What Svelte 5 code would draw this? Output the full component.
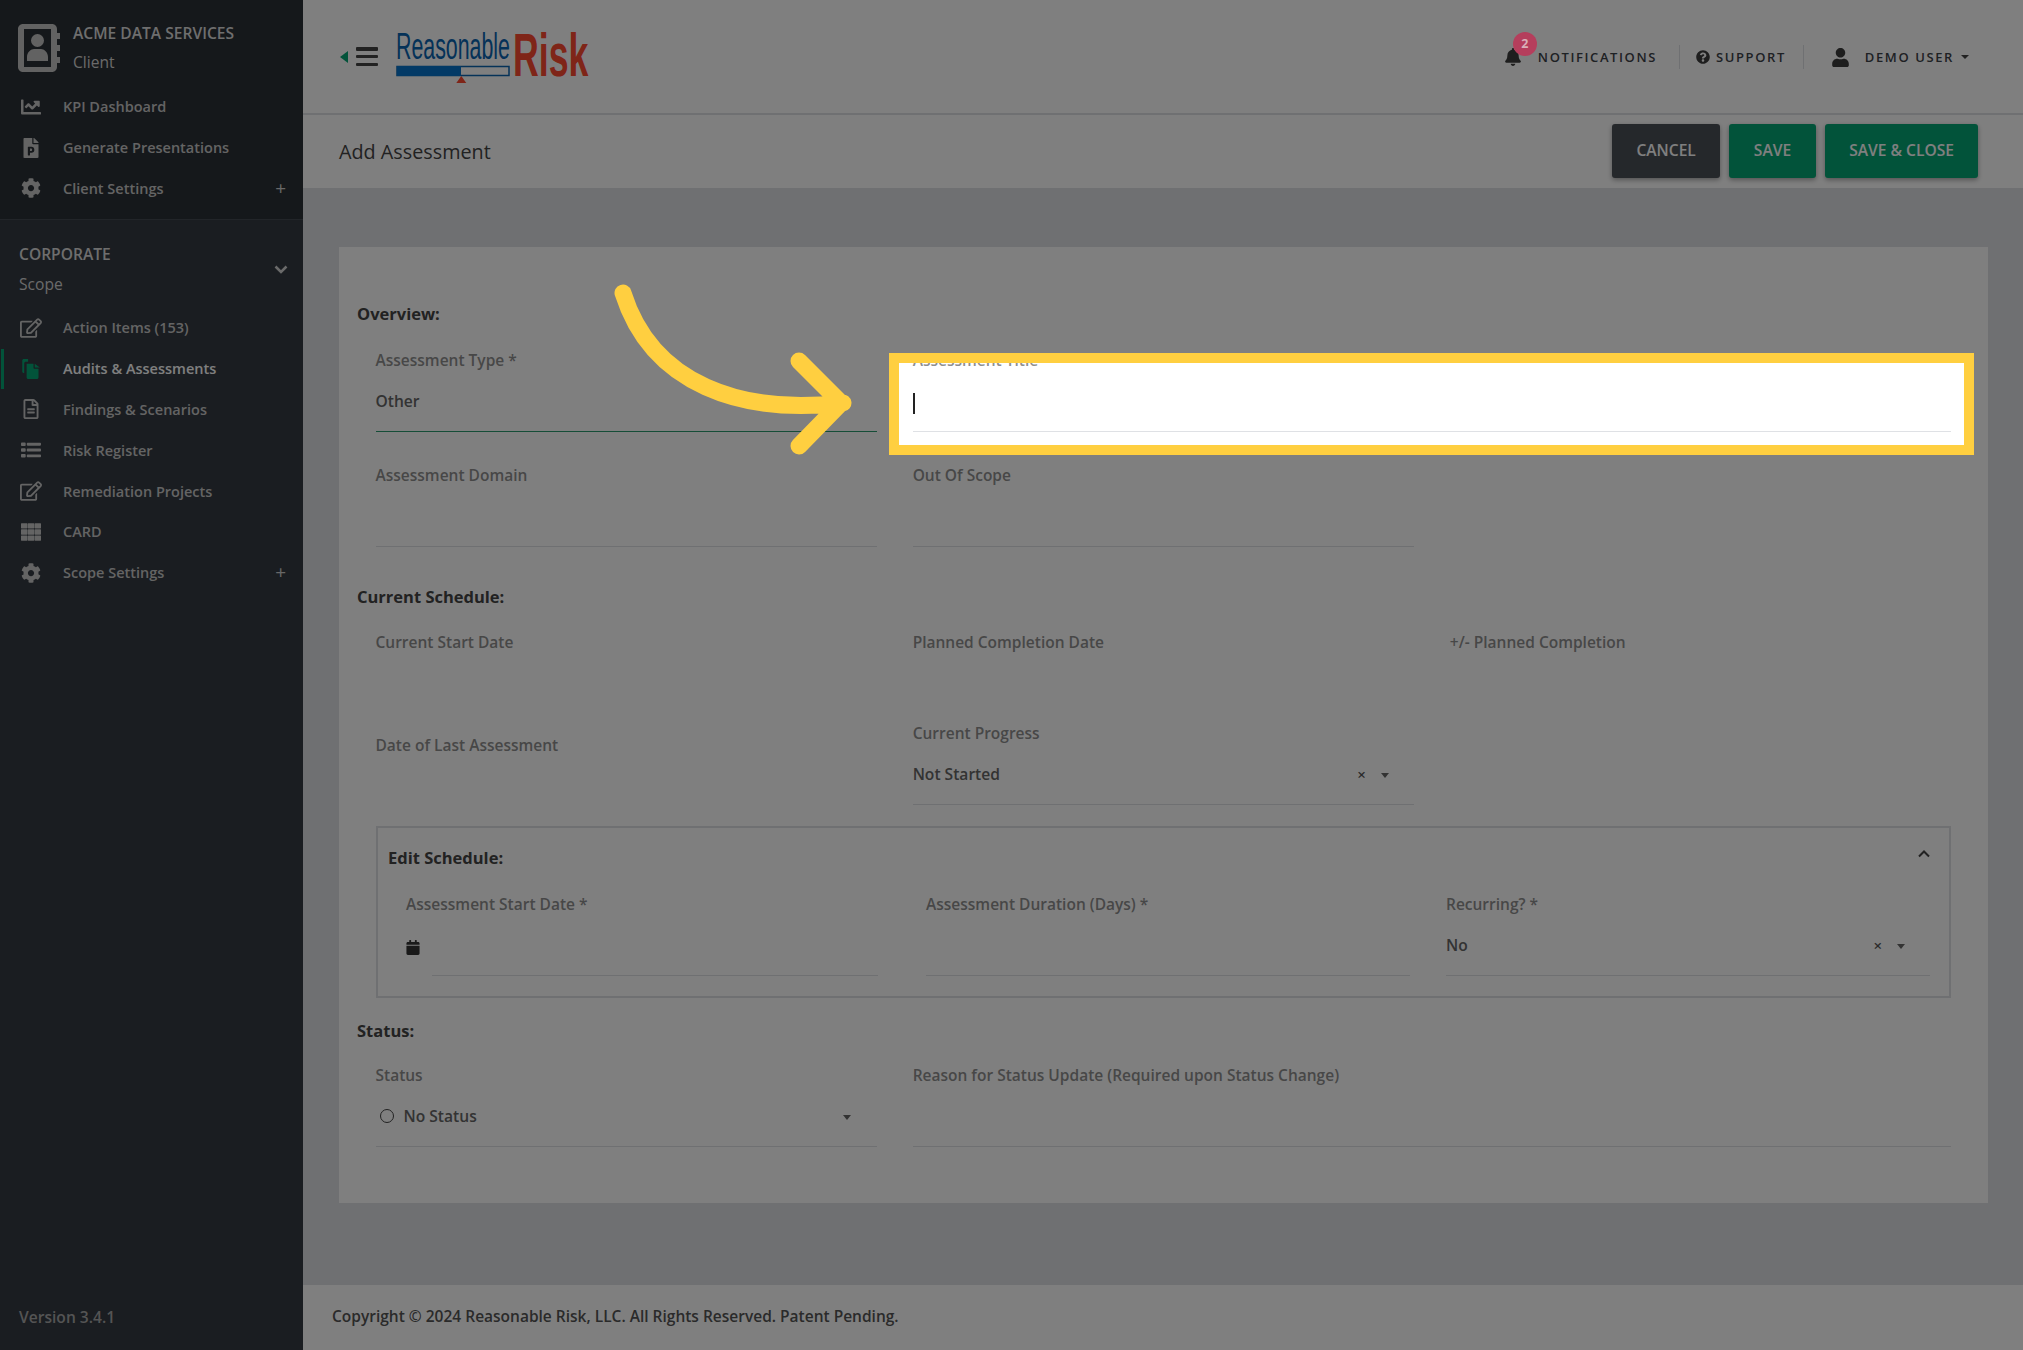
<script>
  const P = {
    chart: ['0 0 512 512', 'M496 384H64V80c0-8.84-7.16-16-16-16H16C7.16 64 0 71.16 0 80v336c0 17.67 14.33 32 32 32h464c8.84 0 16-7.16 16-16v-32c0-8.84-7.16-16-16-16zM464 96H345.94c-21.38 0-32.09 25.85-16.97 40.97l32.4 32.4L288 242.75l-73.37-73.37c-12.5-12.5-32.76-12.5-45.25 0l-68.69 68.69c-6.25 6.25-6.25 16.38 0 22.63l22.62 22.62c6.25 6.25 16.38 6.25 22.63 0L192 237.25l73.37 73.37c12.5 12.5 32.76 12.5 45.25 0l96-96 32.4 32.4c15.12 15.12 40.97 4.41 40.97-16.97V112c.01-8.84-7.15-16-15.99-16z'],
    ppt: ['0 0 384 512', 'M193.7 271.2c8.8 0 15.5 2.7 20.3 8.1 9.6 10.9 9.8 32.7-.2 44.1-4.9 5.6-11.9 8.5-21.1 8.5h-26.9v-60.7h27.9zM377 105L279 7c-4.5-4.5-10.6-7-17-7h-6v128h128v-6.1c0-6.3-2.5-12.4-7-16.9zm-153 31V0H24C10.7 0 0 10.7 0 24v464c0 13.3 10.7 24 24 24h336c13.3 0 24-10.7 24-24V160H248c-13.2 0-24-10.8-24-24zm53 165.2c0 90.3-88.8 77.6-111.1 77.6V436c0 6.6-5.4 12-12 12h-30.8c-6.6 0-12-5.4-12-12V236.2c0-6.6 5.4-12 12-12h81c44.5 0 72.9 32.8 72.9 77z'],
    cog: ['0 0 512 512', 'M487.4 315.7l-42.6-24.6c4.3-23.2 4.3-47 0-70.2l42.6-24.6c4.9-2.8 7.1-8.6 5.5-14-11.1-35.6-30-67.8-54.7-94.6-3.8-4.1-10-5.1-14.8-2.3L380.8 110c-17.9-15.4-38.5-27.3-60.8-35.1V25.8c0-5.6-3.9-10.5-9.4-11.7-36.7-8.2-74.3-7.8-109.2 0-5.5 1.2-9.4 6.1-9.4 11.7V75c-22.2 7.9-42.8 19.8-60.8 35.1L88.7 85.5c-4.9-2.8-11-1.9-14.8 2.3-24.7 26.7-43.6 58.9-54.7 94.6-1.7 5.4.6 11.2 5.5 14L67.3 221c-4.3 23.2-4.3 47 0 70.2l-42.6 24.6c-4.9 2.8-7.1 8.6-5.5 14 11.1 35.6 30 67.8 54.7 94.6 3.8 4.1 10 5.1 14.8 2.3l42.6-24.6c17.9 15.4 38.5 27.3 60.8 35.1v49.2c0 5.6 3.9 10.5 9.4 11.7 36.7 8.2 74.3 7.8 109.2 0 5.5-1.2 9.4-6.1 9.4-11.7v-49.2c22.2-7.9 42.8-19.8 60.8-35.1l42.6 24.6c4.9 2.8 11 1.9 14.8-2.3 24.7-26.7 43.6-58.9 54.7-94.6 1.5-5.5-.7-11.3-5.6-14.1zM256 336c-44.1 0-80-35.9-80-80s35.9-80 80-80 80 35.9 80 80-35.9 80-80 80z'],
    edit: ['0 0 576 512', 'M402.3 344.9l32-32c5-5 13.7-1.5 13.7 5.7V464c0 26.5-21.5 48-48 48H48c-26.5 0-48-21.5-48-48V112c0-26.5 21.5-48 48-48h273.5c7.1 0 10.7 8.6 5.7 13.7l-32 32c-1.5 1.5-3.5 2.3-5.7 2.3H48v352h352V350.5c0-2.1.8-4.1 2.3-5.6zm156.6-201.8L296.3 405.7l-90.4 10c-26.2 2.9-48.5-19.2-45.6-45.6l10-90.4L432.9 17.1c22.9-22.9 59.9-22.9 82.7 0l43.2 43.2c22.9 22.9 22.9 60 .1 82.8zM460.1 174L402 115.9 216.2 301.8l-7.3 65.3 65.3-7.3L460.1 174zm64.8-79.7l-43.2-43.2c-4.1-4.1-10.8-4.1-14.8 0L436 82l58.1 58.1 30.9-30.9c4-4.2 4-10.8-.1-14.9z'],
    copy: ['0 0 448 512', 'M0 40C0 18 18 0 40 0h110v70H90c-22 0-40 18-40 40v250H40c-22 0-40-18-40-40zM112 120h176v110c0 10 8 18 18 18h110v224c0 22-18 40-40 40H152c-22 0-40-18-40-40zM320 120l128 96H320z'],
    file: ['0 0 384 512', 'M288 248v28c0 6.6-5.4 12-12 12H108c-6.6 0-12-5.4-12-12v-28c0-6.6 5.4-12 12-12h168c6.6 0 12 5.4 12 12zm-12 72H108c-6.6 0-12 5.4-12 12v28c0 6.6 5.4 12 12 12h168c6.6 0 12-5.4 12-12v-28c0-6.6-5.4-12-12-12zm108-188.1V464c0 26.5-21.5 48-48 48H48c-26.5 0-48-21.5-48-48V48C0 21.5 21.5 0 48 0h204.1C264.8 0 277 5.1 286 14.1L369.9 98c9 8.9 14.1 21.2 14.1 33.9zm-128-80V128h76.1L256 51.9zM336 464V176H232c-13.3 0-24-10.7-24-24V48H48v416h288z'],
    list: ['0 0 512 512', 'M20 64h80c11 0 20 9 20 20v48c0 11-9 20-20 20H20C9 152 0 143 0 132V84c0-11 9-20 20-20zM168 72h324c11 0 20 9 20 20v32c0 11-9 20-20 20H168c-11 0-20-9-20-20V92c0-11 9-20 20-20zM20 212h80c11 0 20 9 20 20v48c0 11-9 20-20 20H20c-11 0-20-9-20-20v-48c0-11 9-20 20-20zM168 220h324c11 0 20 9 20 20v32c0 11-9 20-20 20H168c-11 0-20-9-20-20v-32c0-11 9-20 20-20zM20 360h80c11 0 20 9 20 20v48c0 11-9 20-20 20H20c-11 0-20-9-20-20v-48c0-11 9-20 20-20zM168 368h324c11 0 20 9 20 20v32c0 11-9 20-20 20H168c-11 0-20-9-20-20v-32c0-11 9-20 20-20z'],
    grid: ['0 0 512 512', 'M12 32h140c7 0 12 5 12 12v112c0 7-5 12-12 12H12c-7 0-12-5-12-12V44c0-7 5-12 12-12zM186 32h140c7 0 12 5 12 12v112c0 7-5 12-12 12H186c-7 0-12-5-12-12V44c0-7 5-12 12-12zM360 32h140c7 0 12 5 12 12v112c0 7-5 12-12 12H360c-7 0-12-5-12-12V44c0-7 5-12 12-12zM12 188h140c7 0 12 5 12 12v112c0 7-5 12-12 12H12c-7 0-12-5-12-12V200c0-7 5-12 12-12zM186 188h140c7 0 12 5 12 12v112c0 7-5 12-12 12H186c-7 0-12-5-12-12V200c0-7 5-12 12-12zM360 188h140c7 0 12 5 12 12v112c0 7-5 12-12 12H360c-7 0-12-5-12-12V200c0-7 5-12 12-12zM12 344h140c7 0 12 5 12 12v112c0 7-5 12-12 12H12c-7 0-12-5-12-12V356c0-7 5-12 12-12zM186 344h140c7 0 12 5 12 12v112c0 7-5 12-12 12H186c-7 0-12-5-12-12V356c0-7 5-12 12-12zM360 344h140c7 0 12 5 12 12v112c0 7-5 12-12 12H360c-7 0-12-5-12-12V356c0-7 5-12 12-12z']
  };
  const clientNav = [
    { label: 'KPI Dashboard', icon: 'chart' },
    { label: 'Generate Presentations', icon: 'ppt' },
    { label: 'Client Settings', icon: 'cog', plus: true }
  ];
  const scopeNav = [
    { label: 'Action Items (153)', icon: 'edit' },
    { label: 'Audits & Assessments', icon: 'copy', active: true },
    { label: 'Findings & Scenarios', icon: 'file' },
    { label: 'Risk Register', icon: 'list' },
    { label: 'Remediation Projects', icon: 'edit' },
    { label: 'CARD', icon: 'grid' },
    { label: 'Scope Settings', icon: 'cog', plus: true }
  ];
</script>

{#snippet navItem(item)}
  <a class="nav-item" class:active={item.active} href="#top">
    <svg class="nav-icon" viewBox={P[item.icon][0]}><path d={P[item.icon][1]} /></svg>
    <span class="nav-label">{item.label}</span>
    {#if item.plus}<span class="plus">+</span>{/if}
  </a>
{/snippet}

{#snippet clearCaret()}
  <span class="x">×</span><span class="caret"></span>
{/snippet}

<div class="app">
  <aside class="sidebar">
    <div class="client">
      <div class="client-head">
        <svg class="book" viewBox="0 0 42 48">
          <path d="M5 0h29c2.8 0 5 2.2 5 5v4h3v6h-3v6h3v6h-3v6h3v6h-3v4c0 2.800-2.200 5-5 5H5c-2.800 0-5-2.200-5-5V5c0-2.800 2.200-5 5-5zM6 5v38h27V5zM19.500 10a6.500 6.500 0 1 1 0 13 6.500 6.500 0 0 1 0-13zM9 33c0-5 4-8 7-8h7c3 0 7 3 7 8v4H9z" fill-rule="evenodd" />
        </svg>
        <div class="client-text">
          <div class="client-name">ACME DATA SERVICES</div>
          <div class="client-sub">Client</div>
        </div>
      </div>
      <nav class="nav">
        {#each clientNav as item}{@render navItem(item)}{/each}
      </nav>
    </div>
    <div class="scope">
      <div class="scope-head">
        <div>
          <div class="scope-name">CORPORATE</div>
          <div class="scope-sub">Scope</div>
        </div>
        <svg class="scope-chev" viewBox="0 0 14 9"><path d="M1.500 1.500 7 7l5.500-5.500" /></svg>
      </div>
      <nav class="nav scope-nav">
        {#each scopeNav as item}{@render navItem(item)}{/each}
      </nav>
      <div class="version">Version 3.4.1</div>
    </div>
  </aside>

  <main class="main">
    <header class="topbar">
      <button class="menu" aria-label="Toggle menu">
        <span class="menu-caret"></span>
        <span class="burger"><i></i><i></i><i></i></span>
      </button>
      <svg class="logo" viewBox="0 0 194 51" role="img" aria-label="Reasonable Risk">
        <text transform="translate(1 27) scale(.89 1.57)" class="logo-a">Reasonable</text>
        <text transform="translate(118 44) scale(1.19 2.05)" class="logo-b">Risk</text>
        <rect x="2" y="34.500" width="112" height="9" class="logo-bar" />
        <rect x="2" y="34" width="64" height="10" class="logo-fill" />
        <path d="M66.300 44l5 7h-10z" class="logo-tri" />
      </svg>
      <div class="topnav">
        <div class="tn tn-notif">
          <span class="bell-wrap">
            <svg class="bell" viewBox="0 0 448 512"><path d="M224 512c35.320 0 63.970-28.650 63.970-64H160.030c0 35.350 28.650 64 63.970 64zm215.390-149.710c-19.320-20.760-55.470-51.990-55.470-154.290 0-77.700-54.480-139.900-127.940-155.160V32c0-17.670-14.320-32-31.980-32s-31.980 14.330-31.980 32v20.840C118.560 68.100 64.080 130.300 64.080 208c0 102.300-36.150 133.530-55.470 154.290-6 6.450-8.660 14.160-8.610 21.710.11 16.400 12.980 32 32.100 32h383.800c19.120 0 32-15.600 32.100-32 .05-7.550-2.610-15.270-8.610-21.710z" /></svg>
            <span class="badge">2</span>
          </span>
          <span>NOTIFICATIONS</span>
        </div>
        <div class="tn tn-support">
          <svg class="q" viewBox="0 0 512 512"><path d="M504 256c0 136.997-111.043 248-248 248S8 392.997 8 256C8 119.083 119.043 8 256 8s248 111.083 248 248zM262.655 90c-54.497 0-89.255 22.957-116.549 63.758-3.536 5.286-2.353 12.415 2.715 16.258l34.699 26.310c5.205 3.947 12.621 3.008 16.665-2.122 17.864-22.658 30.113-35.797 57.303-35.797 20.429 0 45.698 13.148 45.698 32.958 0 14.976-12.363 22.667-32.534 33.976C247.128 238.528 216 254.941 216 296v4c0 6.627 5.373 12 12 12h56c6.627 0 12-5.373 12-12v-1.333c0-28.462 83.186-29.647 83.186-106.667 0-58.002-60.165-102-116.531-102zM256 338c-25.365 0-46 20.635-46 46 0 25.364 20.635 46 46 46s46-20.636 46-46c0-25.365-20.635-46-46-46z" /></svg>
          <span>SUPPORT</span>
        </div>
        <div class="tn tn-user">
          <svg class="user" viewBox="0 0 448 512"><path d="M224 256c70.700 0 128-57.300 128-128S294.700 0 224 0 96 57.300 96 128s57.300 128 128 128zm89.600 32h-16.700c-22.200 10.200-46.900 16-72.900 16s-50.600-5.800-72.900-16h-16.700C60.200 288 0 348.200 0 422.400V464c0 26.500 21.500 48 48 48h352c26.500 0 48-21.500 48-48v-41.600c0-74.200-60.200-134.400-134.400-134.400z" /></svg>
          <span>DEMO USER</span>
          <span class="user-caret"></span>
        </div>
      </div>
    </header>

    <div class="titlebar">
      <h1>Add Assessment</h1>
      <div class="actions">
        <button class="btn btn-dark">CANCEL</button>
        <button class="btn btn-green btn-save">SAVE</button>
        <button class="btn btn-green">SAVE &amp; CLOSE</button>
      </div>
    </div>

    <div class="content">
      <section class="card">
        <h3 class="sec">Overview:</h3>
        <div class="grid g-top">
          <div class="field">
            <label>Assessment Type *</label>
            <div class="value focus">Other</div>
          </div>
          <div class="field span2">
            <label>Assessment Title</label>
            <div class="value"><span class="cursor"></span></div>
          </div>
          <div class="field">
            <label>Assessment Domain</label>
            <div class="value"></div>
          </div>
          <div class="field">
            <label>Out Of Scope</label>
            <div class="value"></div>
          </div>
        </div>

        <h3 class="sec sec-2">Current Schedule:</h3>
        <div class="grid g-sched">
          <label>Current Start Date</label>
          <label>Planned Completion Date</label>
          <label>+/- Planned Completion</label>
          <label class="last">Date of Last Assessment</label>
          <div class="field">
            <label>Current Progress</label>
            <div class="value"><span class="grow">Not Started</span>{@render clearCaret()}</div>
          </div>
        </div>

        <fieldset class="box">
          <div class="box-head">
            <h3 class="sec">Edit Schedule:</h3>
            <svg class="box-chev" viewBox="0 0 12 8"><path d="M1 6.500 6 1.500l5 5" /></svg>
          </div>
          <div class="box-grid">
            <div class="field">
              <label>Assessment Start Date *</label>
              <div class="date-row">
                <svg class="cal" viewBox="0 0 448 512"><path d="M0 464c0 26.500 21.500 48 48 48h352c26.500 0 48-21.500 48-48V192H0zM400 64h-48V16c0-8.800-7.200-16-16-16h-32c-8.800 0-16 7.200-16 16v48H160V16c0-8.800-7.200-16-16-16h-32c-8.800 0-16 7.200-16 16v48H48C21.500 64 0 85.500 0 112v48h448v-48c0-26.500-21.500-48-48-48z" /></svg>
                <div class="value grow"></div>
              </div>
            </div>
            <div class="field">
              <label>Assessment Duration (Days) *</label>
              <div class="value"></div>
            </div>
            <div class="field">
              <label>Recurring? *</label>
              <div class="value"><span class="grow">No</span>{@render clearCaret()}</div>
            </div>
          </div>
        </fieldset>

        <h3 class="sec sec-3">Status:</h3>
        <div class="grid g-status">
          <div class="field">
            <label>Status</label>
            <div class="value status">
              <span class="dot"></span>
              <span class="grow">No Status</span>
              <span class="caret caret-status"></span>
            </div>
          </div>
          <div class="field span2">
            <label>Reason for Status Update (Required upon Status Change)</label>
            <div class="value"></div>
          </div>
        </div>
      </section>
    </div>

    <footer class="footer">Copyright © 2024 Reasonable Risk, LLC. All Rights Reserved. Patent Pending.</footer>
  </main>

  <div class="spotlight"></div>
  <svg class="arrow" viewBox="0 0 2023 1350">
    <path d="M623 293C652 385 742 415 843 403M799 361l42 42-42 43" />
  </svg>
</div>

<style>
  :global(body) {
    margin: 0;
    font-family: "Open Sans", "Noto Sans", sans-serif;
    overflow: hidden;
  }
  .app {
    position: relative;
    display: grid;
    grid-template-columns: 303px 1fr;
    height: 1350px;
    overflow: hidden;
    font-size: 15.600px;
    color: #5c5f63;
  }

  /* sidebar */
  .sidebar { display: flex; flex-direction: column; background: #343a42; }
  .client { height: 220px; box-sizing: border-box; background: #2b3036; border-bottom: 1px solid #454b52; padding-top: 24px; }
  .client-head { display: flex; padding-left: 18px; gap: 13px; height: 62.500px; }
  .book { width: 42px; height: 48px; fill: #c5c5c5; flex: none; }
  .client-text { line-height: 22px; }
  .client-name { font-weight: 600; color: #dcdcdc; margin-top: -2px; }
  .client-sub { color: #d5d5d5; margin-top: 7px; }
  .nav { display: flex; flex-direction: column; }
  .nav-item {
    display: flex;
    align-items: center;
    height: 40.800px;
    padding: 0 18px 0 20px;
    text-decoration: none;
    color: #c8c8c8;
    font-size: 14.500px;
    font-weight: 600;
    position: relative;
  }
  .nav-icon { width: 22px; height: 20px; fill: #c8c8c8; flex: none; margin-right: 21px; }
  .nav-label { flex: 1; }
  .plus { color: #d0d0d0; font-size: 19px; font-weight: 500; line-height: 1; margin-right: -1px; }
  .active { color: #fff; }
  .active::before { content: ""; position: absolute; left: 1px; top: 1px; bottom: 0; width: 3px; background: #05a674; }
  .active .nav-icon { fill: #05a674; }
  .scope { flex: 1; display: flex; flex-direction: column; }
  .scope-head { display: flex; justify-content: space-between; align-items: center; padding: 19px 15px 0 19px; height: 60px; }
  .scope-name { font-weight: 600; color: #dcdcdc; line-height: 22px; }
  .scope-sub { color: #d5d5d5; line-height: 22px; margin-top: 8px; }
  .scope-chev { width: 14px; height: 9px; fill: none; stroke: #d5d5d5; stroke-width: 2.500; margin-top: 1px; }
  .scope-nav { margin-top: 8.500px; }
  .version { margin-top: auto; padding: 0 0 22px 19px; color: #a8a8a8; line-height: 22px; font-weight: 600; }

  /* main */
  .main { display: flex; flex-direction: column; min-width: 0; background: #dfe1e5; }
  .topbar { flex: none; box-sizing: border-box; background: #fff; display: flex; align-items: flex-start; border-bottom: 2px solid #dfe1e5; height: 115px; }
  .menu { display: flex; align-items: center; gap: 8px; margin: 47px 0 0 37px; padding: 0; border: 0; background: none; }
  .menu-caret { width: 0; height: 0; border: 6.500px solid transparent; border-left: 0; border-right: 8px solid #05a674; }
  .burger { display: flex; flex-direction: column; justify-content: space-between; width: 22px; height: 19px; }
  .burger i { height: 3.500px; background: #444; border-radius: 1px; }
  .logo { width: 194px; height: 51px; margin: 32px 0 0 17px; overflow: visible; }
  .logo-a { font: 400 24px "Liberation Sans", sans-serif; fill: #0a64b0; }
  .logo-b { font: 700 30px "Liberation Sans", sans-serif; fill: #ff4a30; }
  .logo-bar { fill: #fff; stroke: #0a64b0; stroke-width: 1.500; }
  .logo-fill { fill: #0674cc; }
  .logo-tri { fill: #ff4a30; }

  .topnav { margin-left: auto; display: flex; align-items: center; height: 24px; margin-top: 45px; padding-right: 54px; font-size: 13px; font-weight: 600; letter-spacing: 1.600px; color: #3d4248; }
  .tn { display: flex; align-items: center; height: 24px; }
  .tn-notif { padding-right: 22px; border-right: 1px solid #dfe1e5; gap: 17px; }
  .tn-support { padding: 0 17px 0 16px; border-right: 1px solid #dfe1e5; gap: 6px; }
  .tn-user { padding-left: 28px; gap: 16px; }
  .bell-wrap { position: relative; display: block; width: 16px; height: 18px; }
  .bell { width: 16px; height: 18px; fill: #3d3d3d; display: block; }
  .q { width: 14px; height: 14px; fill: #3d3d3d; }
  .user { width: 17px; height: 19px; fill: #3d3d3d; }
  .user-caret { width: 0; height: 0; border: 4px solid transparent; border-top-color: #444; border-bottom: 0; margin-left: -9px; }
  .badge { position: absolute; z-index: 5; left: 6px; top: -16px; width: 24px; height: 24px; border-radius: 50%; background: #b53e5c; color: #d9b0b8; font-size: 12.500px; letter-spacing: 0; font-weight: 700; line-height: 24px; text-align: center; margin-left: 2px; }

  .titlebar { height: 73px; flex: none; box-sizing: border-box; background: #fff; display: flex; align-items: center; padding: 0 45px 1px 36px; justify-content: space-between; }
  h1 { margin: 0; font-size: 19.800px; font-weight: 500; color: #444; }
  .actions { display: flex; gap: 9.500px; }
  .btn { height: 54px; border: 0; border-radius: 3px; padding: 0 24px 2px; font: 600 15.600px "Open Sans", sans-serif; color: #fff; box-shadow: 0 2px 5px rgba(0, 0, 0, .35); }
  .btn-save { padding: 0 24.500px 2px; }
  .btn-dark { background: #4b5056; }
  .btn-green { background: #05a674; }

  .content { flex: 1; padding: 59px 35px 0 36px; }
  .card { background: #fff; height: 956px; box-sizing: border-box; padding: 55px 37px 0 18px; }
  .sec { margin: 0; font-size: 16.500px; font-weight: 700; line-height: 23px; color: #444; }
  .sec-2 { margin-top: 38px; }
  .sec-3 { margin-top: 21px; }
  .grid { display: grid; grid-template-columns: repeat(3, 1fr); column-gap: 36px; margin-left: 18.500px; }
  .g-top { margin-top: 24px; row-gap: 32px; }
  .g-sched { row-gap: 69px; margin-top: 23px; }
  .g-status { margin-top: 22px; }
  .span2 { grid-column: span 2; }
  label { display: block; line-height: 22px; font-size: 15.500px; font-weight: 600; color: #8f8f8f; }
  .last { margin-top: 12px; }
  .field { min-width: 0; }
  .value { height: 60px; box-sizing: content-box; border-bottom: 1px solid #dfe1e5; display: flex; align-items: center; color: #666; font-weight: 600; font-size: 15.600px; }
  .focus { border-bottom-color: #2b9a6e; }
  .grow { flex: 1; min-width: 0; }
  .cursor { width: 2px; height: 21px; background: #222; margin-top: 5px; }
  .x { font-size: 15px; font-weight: 600; margin-right: 15px; color: #555; }
  .caret { width: 0; height: 0; border: 4.500px solid transparent; border-top: 5px solid #666; border-bottom: 0; margin: 3px 25px 0 0; }
  .status .dot { width: 12px; height: 12px; border: 1.500px solid #444; border-radius: 50%; margin: 0 10px 0 4px; }
  .caret-status { margin-right: 26px; }

  .box { margin: 21px 0 0 19px; padding: 18px 0 19px 0; border: 2px solid #dfe1e5; height: 172px; box-sizing: border-box; min-width: 0; }
  .box-head { display: flex; justify-content: space-between; align-items: center; padding: 0 19px 0 10px; }
  .box-chev { width: 12px; height: 8px; fill: none; stroke: #444; stroke-width: 2; margin-top: -8px; }
  .box-grid { display: grid; grid-template-columns: repeat(3, 484px); column-gap: 36px; margin: 24px 0 0 28px; }
  .box-grid .field:first-child { margin-right: 12px; }
  .date-row { display: flex; align-items: center; }
  .cal { width: 14px; height: 15px; fill: #333; margin: 4px 12px 0 0; }

  .footer { height: 65px; flex: none; box-sizing: border-box; background: #fff; display: flex; align-items: center; padding: 0 0 3px 29px; font-weight: 600; color: #555; font-size: 15.500px; }

  /* walkthrough overlay */
  .spotlight {
    position: absolute;
    left: 889px;
    top: 353px;
    width: 1085px;
    height: 102px;
    box-sizing: border-box;
    border: 10px solid #ffcf40;
    box-shadow: 0 0 0 4000px rgba(0, 0, 0, .5);
    pointer-events: none;
  }
  .arrow {
    position: absolute;
    inset: 0;
    width: 2023px;
    height: 1350px;
    fill: none;
    stroke: #ffcf40;
    stroke-width: 17;
    stroke-linecap: round;
    stroke-linejoin: round;
    pointer-events: none;
  }
</style>
